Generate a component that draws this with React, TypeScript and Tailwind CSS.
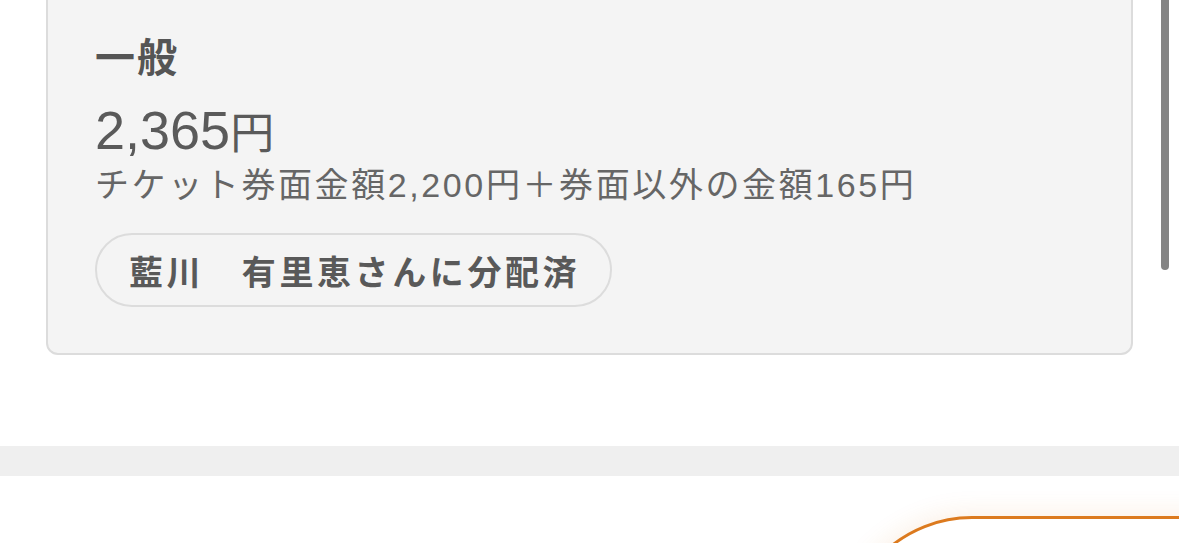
export default function App() {
  const jp = { fontFamily: '"Noto Sans CJK JP", "Noto Sans", sans-serif' };
  const latin = { fontFamily: '"Liberation Sans", "Noto Sans CJK JP", sans-serif' };
  return (
    <div className="relative w-[1179px] h-[543px] overflow-hidden bg-white" style={jp}>
      {/* ticket card, its top edge scrolled out of view */}
      <div className="px-[46px]">
        <div className="-mt-[20px] rounded-[12px] border-2 border-[#dcdcdc] bg-[#f4f4f4] pl-[47px] pr-[40px] pt-[49px] pb-[46px]">
          <div className="text-[40px] leading-[48px] font-bold tracking-[2px] text-[#555555]">一般</div>
          <div className="mt-[21px] text-[54px] leading-[60px] text-[#5a5a5a]" style={latin}>
            2,365<span className="text-[44px]" style={jp}>円</span>
          </div>
          <div className="mt-[3px] text-[34px] leading-[44px] tracking-[2.6px] text-[#666666]" style={latin}>
            チケット券面金額2,200円＋券面以外の金額165円
          </div>
          <div className="mt-[26px] flex">
            <div className="h-[74px] flex items-center rounded-full border-2 border-[#dcdcdc] pl-[32px] pr-[30px] text-[34px] font-bold tracking-[3.6px] text-[#595959]">
              藍川　有里恵さんに分配済
            </div>
          </div>
        </div>
      </div>

      {/* section divider */}
      <div className="mt-[91px] h-[30px] bg-[#efefef]" />

      {/* bottom action button */}
      <div className="mt-[40px] pl-[842px]">
        <div className="h-[260px] w-[600px] rounded-[130px] border-[3px] border-[#dc7a1e] bg-white shadow-[0_0_28px_rgba(220,122,30,0.14)]" />
      </div>

      {/* scrollbar thumb */}
      <div className="absolute -top-[20px] left-[1161px] h-[290px] w-[8px] rounded-full bg-[#848484]" />
    </div>
  );
}
